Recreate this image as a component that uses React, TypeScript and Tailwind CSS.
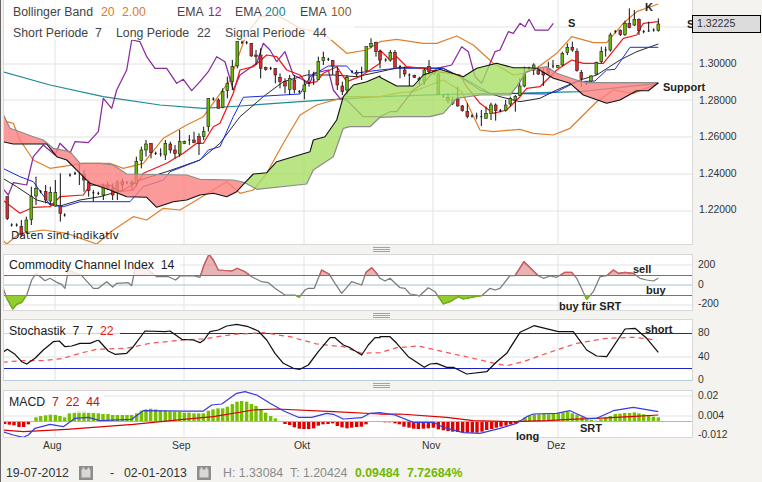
const at = (l: number[], r: number[] = [], top = 0) => {
  const out: string[] = [];
  for (let i = 0; i < l.length; i += 2) out.push(`${(l[i] / 3).toFixed(1)},${(top + l[i + 1] / 3).toFixed(1)}`);
  for (let i = 0; i < r.length; i += 2) out.push(`${(380 + r[i] / 3).toFixed(1)},${(top + r[i + 1] / 3).toFixed(1)}`);
  return out.join(" ");
};
const back = (s: string) => s.split(" ").reverse().join(" ");

// curves are noted in 3x crop pixels, left half and right half of the chart
const redTop = at([8,340,30,385,60,395,100,410,130,420,160,445,210,455,240,490,300,490,340,495,380,522,560,525,600,538,700,540,735,548]);
const redBottom = at([8,425,40,432,140,432,170,470,200,480,240,520,270,550,330,570,380,590,440,592,470,622,520,605,560,600,600,585,640,580,680,590,710,575,735,548]);
const greenTop = at([735,548,760,522,800,518,830,485,880,470,930,455,940,420,975,410,1010,360,1030,290,1060,255,1100,245,1140,228], [0,232,50,258,100,258,130,225,180,208,250,230,290,205,350,190,400,203,440,203,470,205]);
const greenBottom = at([735,548,770,568,920,552,940,510,1000,470,1030,385,1050,380,1110,380], [0,352,60,350,150,350,190,340,230,295,300,285,340,285,390,285,410,260,440,215,470,205]);
const red2Top = at([], [470,205,500,200,530,220,590,240,620,248,835,248]);
const red2Bottom = at([], [470,205,520,235,570,250,610,285,680,310,720,300,770,272,805,272,835,248]);

const ema200 = at([8,215,150,255,310,290,480,315,610,325,720,318,900,305,1140,290], [200,283,400,280,600,275,835,250]);
const bbUp = at([20,365,40,370,60,420,100,480,150,505,250,490,330,490,370,505,430,490,490,415,560,375,610,350,650,295,690,240,715,170,740,100,780,50,830,45,900,85,970,100,1040,160,1100,150,1140,125], [50,118,130,130,170,130,230,108,280,135,340,190,400,225,430,220,470,205,530,160,575,110,640,128,680,128,730,70,770,35,835,12]);
const bbLow = at([8,720,20,732,60,700,130,690,200,700,290,732,340,690,400,650,440,660,490,625,540,630,590,600,680,545,720,580,760,570,800,520,850,430,900,345,950,315,1040,290,1140,290], [60,278,100,275,150,255,190,240,245,275,300,390,340,395,420,388,460,400,520,405,570,385,610,345,650,305,700,270,760,280,835,250]);
const purple = at([8,565,25,585,40,548,80,555,100,470,130,435,165,465,180,430,210,460,225,425,265,428,295,395,310,295,335,325,350,270,380,210,395,120,420,125,440,170,465,205,500,205,530,250,550,238,575,272,600,245,625,215,650,170,675,185,700,270,720,225,770,190,790,130,810,150,830,185,855,155,880,225,930,250,940,220,985,210,1000,270,1020,295,1040,300,1090,350,1140,350], [30,335,50,335,100,270,130,250,170,205,215,195,245,140,265,155,285,230,305,250,345,155,360,150,385,95,400,100,420,70,435,80,447,58,465,90,505,90,520,70]);
const redLine = at([8,600,60,640,100,622,150,620,180,590,250,585,270,555,330,555,360,575,400,570,430,520,500,490,550,460,590,430,610,430,640,380,660,370,700,280,720,210,760,200,800,165,830,170,860,210,900,225,920,250,950,245,970,220,1010,200,1040,245,1080,230,1140,190], [0,150,30,180,50,170,80,200,130,205,170,215,240,225,260,260,300,310,340,340,380,330,420,290,440,265,480,260,530,210,575,180,610,190,670,190,730,115,770,105,790,70,835,65]);
const blueLine = at([8,505,60,530,100,545,150,615,190,620,240,605,390,605,430,560,490,540,510,515,600,480,625,450,660,440,700,350,730,292,900,282,930,230,950,218,985,198,1040,198,1060,220,1140,210], [50,205,190,205,260,240,330,280,500,282,530,275,590,245,645,243,680,210,705,208,750,142,835,142]);
const blackLine = at([8,535,50,560,110,600,180,618,240,600,300,590,370,570,420,540,500,515,600,480,660,430,720,350,790,290,850,245,920,225,1000,225,1070,230,1140,215], [60,202,190,205,240,230,300,270,360,290,420,305,480,295,530,270,600,240,650,225,720,180,770,155,835,132]);

// x, wick top, wick bottom, body top, body bottom, g | r | d
type Candle = [number, number, number, number, number, string];
const leftCandles: Candle[] = [
  [22,590,660,590,655,"r"],[35,670,680,675,675,"d"],[50,670,680,675,675,"d"],[64,660,710,680,705,"r"],[79,650,700,660,695,"g"],[94,560,675,590,658,"g"],[108,530,615,565,588,"g"],[122,570,580,575,575,"d"],[137,555,610,575,600,"r"],[151,560,615,577,603,"g"],[166,540,620,578,618,"g"],[181,520,665,618,640,"r"],[194,640,650,645,645,"d"],[210,520,530,525,525,"d"],[225,515,525,520,520,"d"],[238,495,555,495,520,"d"],[252,510,575,522,540,"r"],[266,540,590,548,572,"r"],[280,570,605,578,578,"d"],[295,575,585,580,580,"d"],[310,550,600,558,585,"g"],[323,545,570,558,565,"r"],[338,550,600,565,585,"r"],[352,540,600,548,570,"g"],[367,535,570,545,555,"r"],[381,543,553,548,548,"d"],[396,540,570,548,552,"r"],[409,470,560,485,550,"g"],[424,440,505,450,482,"g"],[438,420,470,432,450,"g"],[453,430,475,430,458,"r"],[467,455,465,460,460,"d"],[482,445,470,462,465,"d"],[496,420,480,430,465,"g"],[511,425,460,432,450,"r"],[525,435,475,450,460,"r"],[539,390,470,425,462,"g"],[553,422,432,425,430,"g"],[568,405,435,420,430,"d"],[582,395,430,420,428,"r"],[597,400,465,410,430,"r"],[611,380,420,395,410,"g"],[625,295,395,295,380,"g"],[640,292,302,297,297,"d"],[655,295,325,300,325,"r"],[668,265,325,275,322,"g"],[682,230,295,250,272,"g"],[697,180,270,200,245,"g"],[712,125,205,125,198,"g"],[726,122,132,127,127,"d"],[740,123,133,128,128,"d"],[754,130,170,130,168,"r"],[768,150,195,165,170,"r"],[782,145,235,165,205,"r"],[797,200,212,203,208,"r"],[812,200,210,205,205,"d"],[826,205,250,205,225,"r"],[840,220,265,232,245,"r"],[855,235,280,245,258,"r"],[869,225,285,235,268,"g"],[883,225,280,240,268,"r"],[898,270,280,275,275,"d"],[913,240,298,255,275,"g"],[927,210,260,250,255,"d"],[941,215,255,240,250,"d"],[955,170,240,185,238,"g"],[970,155,195,172,182,"g"],[985,173,183,178,178,"d"],[998,180,225,182,198,"r"],[1012,200,270,215,255,"r"],[1027,245,285,258,275,"r"],[1041,225,285,232,270,"g"],[1056,210,220,215,215,"d"],[1070,210,230,218,222,"g"],[1085,200,240,218,222,"d"],[1099,140,215,140,212,"g"],[1113,115,145,130,140,"g"],[1128,125,170,128,155,"r"],
];
const rightCandles: Candle[] = [
  [0,150,205,155,180,"r"],[17,175,185,180,180,"d"],[31,150,185,157,180,"g"],[45,150,205,157,205,"r"],[60,195,235,200,200,"d"],[74,200,230,210,222,"r"],[88,220,258,225,225,"d"],[103,224,234,226,232,"r"],[118,230,255,235,240,"g"],[133,205,255,210,245,"g"],[147,180,225,200,215,"r"],[162,210,225,215,220,"g"],[175,220,285,222,282,"g"],[190,283,293,288,288,"d"],[204,280,310,292,302,"g"],[218,290,315,300,310,"g"],[233,260,320,297,318,"r"],[247,315,335,318,332,"r"],[262,310,355,335,350,"r"],[276,343,353,348,348,"d"],[290,338,358,348,348,"d"],[304,330,378,350,350,"d"],[318,320,355,340,355,"g"],[333,308,360,315,340,"g"],[347,310,362,315,332,"r"],[361,327,337,332,332,"d"],[377,300,335,315,332,"g"],[391,290,320,295,312,"g"],[406,285,335,290,300,"g"],[419,235,288,258,286,"g"],[433,200,262,220,258,"g"],[447,200,210,205,205,"d"],[461,190,225,195,210,"g"],[475,200,225,210,222,"r"],[490,205,258,218,225,"r"],[505,185,225,205,220,"r"],[519,180,205,198,198,"d"],[533,195,203,197,202,"g"],[547,155,198,160,195,"g"],[562,130,165,142,158,"g"],[577,125,155,142,150,"r"],[591,145,215,155,212,"r"],[604,210,260,218,235,"r"],[619,245,255,250,250,"d"],[633,225,245,228,243,"g"],[649,185,225,188,222,"g"],[664,140,190,155,185,"g"],[677,140,170,150,150,"d"],[691,98,155,105,150,"g"],[706,90,100,95,95,"d"],[721,88,108,92,104,"r"],[735,62,108,70,104,"g"],[748,25,85,70,82,"r"],[763,30,78,58,75,"g"],[777,55,105,58,92,"r"],[791,90,100,95,95,"d"],[806,65,95,93,93,"d"],[821,85,95,90,90,"d"],[835,55,95,72,92,"g"],
];
const candles = [
  ...leftCandles,
  ...rightCandles.map((c): Candle => [c[0] + 1140, c[1], c[2], c[3], c[4], c[5]]),
];

const months = [55, 184, 304, 433, 558];

const cci = at([8,125,20,160,38,192,50,178,65,172,80,150,95,105,108,85,135,107,150,100,170,112,185,118,195,130,205,75,235,88,245,92,280,130,295,130,320,110,338,126,350,115,385,113,395,122,405,70,430,65,445,75,470,95,505,95,527,105,540,93,580,92,600,97,612,60,627,28,640,45,655,75,695,78,712,70,735,80,755,95,785,110,805,113,825,130,855,150,885,150,897,157,915,135,925,130,943,130,965,75,988,88,1005,115,1025,145,1055,110,1085,120,1098,82,1115,68,1130,85,1140,100], [15,108,30,100,60,128,75,130,90,147,110,150,118,153,145,128,165,140,190,177,210,170,235,155,250,162,285,155,305,152,330,130,345,135,360,130,390,92,405,92,432,50,475,92,490,100,510,93,530,97,555,82,575,82,590,100,620,163,640,140,660,95,680,92,700,75,715,85,735,82,760,85,780,100,800,105,820,108,835,100], 245);
const stochK = at([8,322,22,313,45,328,65,350,80,357,105,340,130,315,160,290,178,288,195,305,215,303,240,295,270,295,295,285,325,318,345,328,380,325,400,305,435,258,495,260,510,258,545,283,580,285,600,293,612,285,630,260,655,255,680,243,710,238,745,245,775,258,800,285,825,325,850,355,880,370,900,373,925,360,955,320,990,278,1005,278,1030,300,1050,308,1085,330,1105,300,1125,278,1140,278], [0,275,30,275,50,295,85,335,133,367,150,357,170,355,200,367,220,367,260,387,320,380,350,350,380,325,420,262,462,242,535,260,580,260,620,315,650,333,680,335,735,252,765,250,800,280,835,322], 245);
const stochD = at([8,352,60,347,130,347,190,340,240,325,290,313,380,310,450,295,550,285,610,282,700,268,790,263,870,275,950,297,1030,305,1085,325,1140,323], [50,308,115,303,190,320,280,340,330,352,380,362,430,350,500,325,590,295,680,280,760,277,830,285], 245);
const macdLine = at([8,155,40,165,70,172,85,165,105,145,150,133,190,140,225,115,265,112,300,122,395,118,430,92,560,93,610,93,635,75,665,72,710,40,735,35,770,45,810,70,850,92,895,112,935,112,980,100,1000,103,1030,117,1085,113,1110,100,1140,98], [45,105,100,127,160,127,190,142,250,158,300,160,360,145,410,130,440,110,460,102,530,100,570,92,620,115,650,115,700,92,760,82,835,95], 380);
const macdSignal = at([8,150,70,155,200,148,400,133,550,118,640,110,760,90,830,87,1000,95,1140,102], [60,102,200,112,280,122,400,125,500,122,570,118,650,115,750,110,835,105], 380);
const histLeft = [14,132,28,134,42,136,57,141,71,141,85,133,108,112,122,108,137,106,151,104,166,105,180,108,194,112,208,100,223,97,237,92,252,92,266,97,280,99,295,100,309,102,324,102,338,105,352,105,367,105,381,105,395,105,410,100,424,92,438,88,452,86,467,88,481,92,496,92,510,94,524,95,539,95,553,98,567,98,582,100,596,100,610,100,625,92,639,88,654,85,668,85,682,80,697,72,711,65,725,63,740,65,754,72,768,78,783,90,797,98,812,108,826,115,855,132,869,135,883,142,898,146,912,147,926,147,941,145,955,137,969,133,984,132,998,130,1012,138,1026,142,1041,145,1055,143,1070,141,1084,140,1098,133];
const histRight = [15,127,28,127,45,130,58,133,72,140,87,143,101,146,115,147,130,146,145,145,160,143,175,148,190,151,204,153,218,155,233,156,248,157,262,158,277,158,291,158,306,155,320,150,335,147,349,143,363,140,378,137,392,133,407,130,420,120,435,112,449,108,463,103,477,103,492,102,506,103,520,100,535,100,549,97,563,96,577,100,591,104,606,110,620,118,634,120,648,122,663,118,677,112,691,108,706,102,720,101,734,99,749,99,763,97,777,100,791,103,806,105,820,110,835,112];
const bars: { x: number; y: number }[] = [];
for (let i = 0; i < histLeft.length; i += 2) bars.push({ x: histLeft[i] / 3, y: histLeft[i + 1] });
for (let i = 0; i < histRight.length; i += 2) bars.push({ x: 380 + histRight[i] / 3, y: histRight[i + 1] });

function Grid({ top, bottom, lines }: { top: number; bottom: number; lines: number[] }) {
  return (
    <g stroke="#e2e2e2" strokeWidth="1">
      {months.map((x) => (
        <line key={x} x1={x} x2={x} y1={top} y2={bottom} />
      ))}
      {lines.map((y) => (
        <line key={y} x1="3" x2="692" y1={y} y2={y} />
      ))}
    </g>
  );
}

function Line({ points, color, width = 1.25, dash }: { points: string; color: string; width?: number; dash?: string }) {
  return <polyline points={points} fill="none" stroke={color} strokeWidth={width} strokeDasharray={dash} strokeLinejoin="round" />;
}

function MainChart() {
  return (
    <svg width="688" height="244" viewBox="4 0 688 244" className="block">
      <Grid top={0} bottom={244} lines={[27, 64, 100, 137, 174, 211]} />
      <Line points={ema200} color="#1d8a96" />
      <Line points={bbUp} color="#e0802c" />
      <Line points={bbLow} color="#e0802c" />
      <Line points={purple} color="#8a2a9e" />
      <Line points={blackLine} color="#111" width={0.9} />
      <Line points={blueLine} color="#1a2be0" width={1} />
      <Line points={redLine} color="#f01818" />
      {candles.map((c) => {
        const x = c[0] / 3;
        return (
          <g key={c[0]}>
            <line x1={x} x2={x} y1={c[1] / 3} y2={c[2] / 3} stroke="#111" strokeWidth="1" />
            {c[5] === "d" ? (
              <rect x={x - 1} y={c[3] / 3 - 0.5} width="2" height="1" fill="#111" />
            ) : (
              <rect x={x - 1.4} y={c[3] / 3} width="2.8" height={(c[4] - c[3]) / 3} fill={c[5] === "g" ? "#66bb00" : "#e02a2a"} stroke="#222" strokeWidth="0.6" />
            )}
          </g>
        );
      })}
      <polygon points={`${redTop} ${back(redBottom)}`} fill="#fb7f7f" fillOpacity="0.8" />
      <polygon points={`${greenTop} ${back(greenBottom)}`} fill="#a6de63" fillOpacity="0.78" />
      <polygon points={`${red2Top} ${back(red2Bottom)}`} fill="#fb7f7f" fillOpacity="0.8" />
      <Line points={redTop} color="#8c8c8c" width={1.2} />
      <Line points={greenBottom} color="#8c8c8c" width={1.2} />
      <Line points={red2Top} color="#8c8c8c" width={1.2} />
      <Line points={redBottom} color="#111" width={1.1} />
      <Line points={greenTop} color="#111" width={1.1} />
      <Line points={red2Bottom} color="#111" width={1.1} />
    </svg>
  );
}

function CciChart() {
  const upper = `${cci} 658,275.3 4,275.3`;
  const lower = `${cci} 658,295.3 4,295.3`;
  return (
    <svg width="688" height="55" viewBox="4 255 688 55" className="block">
      <defs>
        <clipPath id="above">
          <rect x="0" y="250" width="700" height="25.3" />
        </clipPath>
        <clipPath id="below">
          <rect x="0" y="295.3" width="700" height="20" />
        </clipPath>
      </defs>
      <Grid top={255} bottom={310} lines={[265, 305]} />
      <line x1="4" x2="692" y1="285" y2="285" stroke="#a9bfcd" />
      <line x1="4" x2="692" y1="275.5" y2="275.5" stroke="#6f6f9a" />
      <line x1="4" x2="692" y1="295.5" y2="295.5" stroke="#6f6f9a" />
      <polygon points={upper} fill="#c84a4a" fillOpacity="0.42" clipPath="url(#above)" />
      <polygon points={lower} fill="#7fc60a" fillOpacity="0.85" clipPath="url(#below)" />
      <Line points={cci} color="#7a7a7a" />
      <g clipPath="url(#above)">
        <Line points={cci} color="#d25c5c" />
      </g>
      <g clipPath="url(#below)">
        <Line points={cci} color="#6fb800" />
      </g>
    </svg>
  );
}

function StochChart() {
  return (
    <svg width="688" height="60" viewBox="4 320 688 60" className="block">
      <Grid top={320} bottom={380} lines={[357]} />
      <line x1="4" x2="692" y1="333.5" y2="333.5" stroke="#1a22c8" />
      <line x1="4" x2="692" y1="368.5" y2="368.5" stroke="#1a22c8" />
      <Line points={stochD} color="#f25555" dash="5 4" />
      <Line points={stochK} color="#111" />
    </svg>
  );
}

function MacdChart() {
  return (
    <svg width="688" height="46" viewBox="4 391 688 46" className="block">
      <Grid top={391} bottom={437} lines={[396, 416]} />
      {bars.map((b) => {
        const base = 124;
        const up = b.y < base;
        return (
          <rect
            key={b.x}
            x={b.x - 1.7}
            y={380 + Math.min(b.y, base) / 3}
            width="3.4"
            height={Math.abs(b.y - base) / 3}
            fill={up ? "#77c000" : "#e00000"}
          />
        );
      })}
      <line x1="4" x2="692" y1="421.5" y2="421.5" stroke="#b4b4b4" strokeWidth="1.2" />
      <Line points={macdSignal} color="#d80000" />
      <Line points={macdLine} color="#3a3ae0" />
    </svg>
  );
}

function Grip() {
  return (
    <div className="flex h-full items-center justify-center">
      <div className="flex w-[17px] flex-col gap-[1px]">
        <div className="h-px bg-[#a2a2a2]" />
        <div className="h-px bg-[#a2a2a2]" />
        <div className="h-px bg-[#a2a2a2]" />
      </div>
    </div>
  );
}

function CalendarIcon() {
  return (
    <svg width="14" height="14" viewBox="0 0 14 14" className="shrink-0">
      <rect width="14" height="14" fill="#8c8c8c" />
      <rect x="2.5" y="3.5" width="9" height="8" fill="#d9d8d4" />
      <rect x="3.5" y="1.5" width="2" height="3" fill="#d9d8d4" />
      <rect x="8.5" y="1.5" width="2" height="3" fill="#d9d8d4" />
    </svg>
  );
}

const note = "absolute whitespace-nowrap text-[11px] font-bold leading-[14px] text-[#222]";
const tick = "h-[12px] text-[10.4px] leading-[12px] text-[#333]";

export default function App() {
  return (
    <div className="flex h-[482px] w-[762px] flex-col overflow-hidden border-l border-l-[#666] bg-[#f4f3ef] font-['Liberation_Sans',Arial,sans-serif]">
      {/* price chart */}
      <div className="flex h-[245px]">
        <div className="relative ml-[2px] h-[245px] w-[690px] border-x border-b border-[#d8d8d8] bg-white">
          <MainChart />
          <div className="absolute left-0 top-0 flex h-[40px] w-[350px] flex-col gap-[7px] bg-white/75 pl-[9px] pt-[5px] text-[12.3px] leading-[14px] text-[#444]">
            <div className="flex">
              <span className="w-[88px] shrink-0">Bollinger Band</span>
              <span className="w-[21px] shrink-0 text-[#e07a1e]">20</span>
              <span className="w-[55px] shrink-0 text-[#e07a1e]">2.00</span>
              <span className="w-[31px] shrink-0">EMA</span>
              <span className="w-[27px] shrink-0 text-[#a81c82]">12</span>
              <span className="w-[30px] shrink-0">EMA</span>
              <span className="w-[35px] shrink-0 text-[#16808c]">200</span>
              <span className="w-[31px] shrink-0">EMA</span>
              <span className="text-[#8f5e1c]">100</span>
            </div>
            <div className="flex">
              <span className="w-[82px] shrink-0">Short Periode</span>
              <span className="w-[21px] shrink-0">7</span>
              <span className="w-[81px] shrink-0">Long Periode</span>
              <span className="w-[28px] shrink-0">22</span>
              <span className="w-[88px] shrink-0">Signal Periode</span>
              <span>44</span>
            </div>
          </div>
          <span className="absolute left-[7px] top-[229px] font-['DejaVu_Sans',sans-serif] text-[10.8px] leading-[14px] text-[#222]">
            Daten sind indikativ
          </span>
          <span className={`${note} left-[564px] top-[16px]`}>S</span>
          <span className={`${note} left-[641px] top-[0px]`}>K</span>
          <span className={`${note} left-[683px] top-[17px]`}>S</span>
          <span className={`${note} left-[659px] top-[80px]`}>Support</span>
        </div>
        <div className="relative flex flex-1 flex-col pl-[6px]">
          <div className="absolute -left-[1px] top-[15px] flex h-[18px] w-[69px] items-center border border-black bg-[#dcdcdc] pl-[4px] text-[10.6px] text-[#333]">
            1.32225
          </div>
          <div className="flex flex-col gap-[24.6px] pt-[58px]">
            <span className={tick}>1.30000</span>
            <span className={tick}>1.28000</span>
            <span className={tick}>1.26000</span>
            <span className={tick}>1.24000</span>
            <span className={tick}>1.22000</span>
          </div>
        </div>
      </div>

      <div className="h-[9px]">
        <Grip />
      </div>

      {/* CCI */}
      <div className="flex h-[57px]">
        <div className="relative ml-[2px] w-[690px] border border-[#d8d8d8] bg-white">
          <CciChart />
          <div className="absolute left-0 top-0 h-[20px] w-[176px] bg-white/80 pl-[5px] text-[12.3px] leading-[20px] text-[#222]">Commodity Channel Index&nbsp;&nbsp;14</div>
          <span className={`${note} left-[629px] top-[7px]`}>sell</span>
          <span className={`${note} left-[642px] top-[28px]`}>buy</span>
          <span className={`${note} left-[555px] top-[44px]`}>buy für SRT</span>
        </div>
        <div className="flex flex-1 flex-col gap-[7.5px] pl-[5px] pt-[5px]">
          <span className={tick}>200</span>
          <span className={tick}>0</span>
          <span className={tick}>-200</span>
        </div>
      </div>

      <div className="h-[8px]">
        <Grip />
      </div>

      {/* Stochastik */}
      <div className="flex h-[62px]">
        <div className="relative ml-[2px] w-[690px] border border-[#d8d8d8] border-b-[#b9cbdc] bg-white">
          <StochChart />
          <div className="absolute left-0 top-0 h-[20px] w-[116px] bg-white/80 pl-[5px] text-[12.3px] leading-[22px] text-[#222]">
            Stochastik&nbsp;&nbsp;7&nbsp;&nbsp;7&nbsp;&nbsp;<span className="text-[#e82020]">22</span>
          </div>
          <span className={`${note} left-[641px] top-[2px]`}>short</span>
        </div>
        <div className="flex flex-1 flex-col gap-[11.5px] pl-[5px] pt-[8px]">
          <span className={tick}>80</span>
          <span className={tick}>40</span>
          <span className={tick}>0</span>
        </div>
      </div>

      <div className="h-[9px]">
        <Grip />
      </div>

      {/* MACD */}
      <div className="flex h-[48px]">
        <div className="relative ml-[2px] w-[690px] border border-[#d8d8d8] bg-white">
          <MacdChart />
          <div className="absolute left-0 top-0 h-[22px] w-[100px] bg-white/75 pl-[5px] text-[12.3px] leading-[22px] text-[#222]">
            MACD&nbsp;&nbsp;<span className="text-[#cc1111]">7&nbsp;&nbsp;22&nbsp;&nbsp;44</span>
          </div>
          <span className={`${note} left-[512px] top-[38px]`}>long</span>
          <span className={`${note} left-[576px] top-[30px]`}>SRT</span>
        </div>
        <div className="flex flex-1 flex-col gap-[7.5px] pl-[5px]">
          <span className={tick}>0.02</span>
          <span className={tick}>0.004</span>
          <span className={tick}>-0.012</span>
        </div>
      </div>

      {/* months */}
      <div className="flex h-[16px] items-center pl-[42px] text-[10.4px] leading-[12px] text-[#333]">
        <span className="w-[129px]">Aug</span>
        <span className="w-[122px]">Sep</span>
        <span className="w-[128px]">Okt</span>
        <span className="w-[125px]">Nov</span>
        <span>Dez</span>
      </div>

      {/* footer */}
      <div className="flex flex-1 items-center pl-[5px] pt-[9px] text-[12.3px] leading-[14px]">
        <span className="w-[73px] text-[#333]">19-07-2012</span>
        <CalendarIcon />
        <span className="ml-[17px] w-[14px] text-[#333]">-</span>
        <span className="w-[73px] text-[#333]">02-01-2013</span>
        <CalendarIcon />
        <span className="ml-[12px] w-[67px] text-[#8a8a8a]">H: 1.33084</span>
        <span className="w-[65px] text-[#8a8a8a]">T: 1.20424</span>
        <span className="w-[52px] font-bold text-[#70b800]">0.09484</span>
        <span className="font-bold text-[#70b800]">7.72684%</span>
      </div>
    </div>
  );
}
